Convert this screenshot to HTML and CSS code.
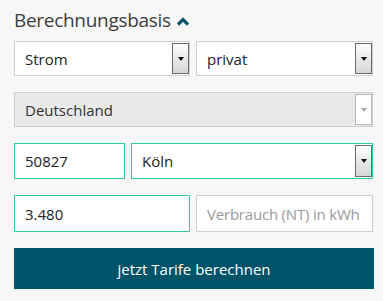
FILE: index.html
```html
<!DOCTYPE html>
<html lang="de">
<head>
<meta charset="utf-8">
<title>Berechnungsbasis</title>
<link rel="stylesheet" href="styles.css">
</head>
<body>
<form class="calc">
  <h2 class="title">Berechnungsbasis
    <svg class="chev" width="12" height="9" viewBox="0 0 12 9"><path d="M1 7.5 L6 2.5 L11 7.5" fill="none" stroke="#00546a" stroke-width="3.2"/></svg>
  </h2>
  <div class="row two">
    <div class="select"><span class="val">Strom</span><span class="btn"><i class="tri"></i></span></div>
    <div class="select"><span class="val">privat</span><span class="btn"><i class="tri"></i></span></div>
  </div>
  <div class="row">
    <div class="select disabled"><span class="val">Deutschland</span><span class="btn"><i class="tri"></i></span></div>
  </div>
  <div class="row plz">
    <input class="field ok" type="text" value="50827">
    <div class="select ok"><span class="val">Köln</span><span class="btn"><i class="tri"></i></span></div>
  </div>
  <div class="row two tall">
    <input class="field ok" type="text" value="3.480">
    <input class="field" type="text" placeholder="Verbrauch (NT) in kWh / Jahr">
  </div>
  <button class="submit" type="button">jetzt Tarife berechnen</button>
</form>
</body>
</html>
```
FILE: styles.css
```css
html, body {
  margin: 0;
  padding: 0;
  background: #f7f7f7;
}
.calc {
  width: 383px;
  height: 301px;
  box-sizing: border-box;
  padding: 0 10px 0 14px;
  font-family: "Open Sans", "DejaVu Sans", sans-serif;
}
.title {
  margin: 0;
  padding-top: 8px;
  height: 41px;
  box-sizing: border-box;
  font-size: 19px;
  font-weight: 400;
  color: #3d3d3d;
  letter-spacing: -0.3px;
  line-height: 24px;
  display: flex;
  align-items: flex-start;
  gap: 6px;
}
.chev {
  margin-top: 9px;
}
.row {
  display: grid;
  grid-template-columns: 1fr;
  height: 35px;
  margin-bottom: 16px;
}
.row.two {
  grid-template-columns: 176px 177px;
  column-gap: 6px;
}
.row.plz {
  grid-template-columns: 111px 242px;
  column-gap: 6px;
  height: 36px;
}
.row.tall {
  height: 37px;
}
.select, .field {
  box-sizing: border-box;
  height: 100%;
  border: 1px solid #cfcfcf;
  background: #fff;
  font-family: "Open Sans", "DejaVu Sans", sans-serif;
  font-size: 15px;
  color: #222;
}
.select {
  display: flex;
  align-items: center;
  justify-content: space-between;
}
.val {
  padding-left: 10px;
}
.btn {
  width: 17px;
  height: calc(100% - 2px);
  box-sizing: border-box;
  border: 1px solid #6a6a6a;
  background: linear-gradient(#fdfdfd, #d6d6d6);
  display: flex;
  align-items: center;
  justify-content: center;
}
.tri {
  width: 0;
  height: 0;
  border-left: 3.5px solid transparent;
  border-right: 3.5px solid transparent;
  border-top: 4px solid #111;
}
.select.disabled {
  background: #e9e9e9;
  color: #333;
}
.select.disabled .btn {
  background: #fff;
  border-color: #b8b8b8;
}
.select.disabled .tri {
  border-top-color: #aaa;
}
.field {
  padding: 0 8px 0 10px;
  outline: none;
  font-size: 15px;
}
.field::placeholder {
  color: #9a9a9a;
  letter-spacing: -0.2px;
}
.ok {
  border-color: #2fcf8f;
}
.submit {
  display: block;
  width: 360px;
  height: 41px;
  border: 0;
  background: #00546a;
  color: #fff;
  font-family: "Open Sans", "DejaVu Sans", sans-serif;
  font-size: 15px;
  cursor: pointer;
}
```
